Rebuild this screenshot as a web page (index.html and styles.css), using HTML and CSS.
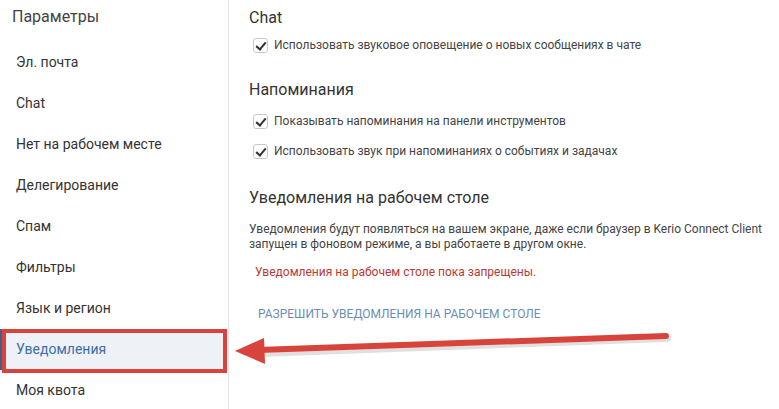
FILE: index.html
```html
<!DOCTYPE html>
<html lang="ru">
<head>
  <meta charset="UTF-8">
  <title>Параметры</title>
  <link rel="stylesheet" href="styles.css">
</head>
<body>
  <div class="page">
    <!-- боковое меню -->
    <div class="sidebar">
      <div class="side-title">Параметры</div>
      <div class="side-item">Эл. почта</div>
      <div class="side-item">Chat</div>
      <div class="side-item">Нет на рабочем месте</div>
      <div class="side-item">Делегирование</div>
      <div class="side-item">Спам</div>
      <div class="side-item">Фильтры</div>
      <div class="side-item">Язык и регион</div>
      <div class="side-item active">Уведомления</div>
      <div class="side-item">Моя квота</div>
    </div>

    <!-- настройки -->
    <div class="main">
      <h2 class="sec-title first">Chat</h2>
      <label class="check-row"><span class="box"></span>Использовать звуковое оповещение о новых сообщениях в чате</label>

      <h2 class="sec-title">Напоминания</h2>
      <div class="group">
        <label class="check-row"><span class="box"></span>Показывать напоминания на панели инструментов</label>
        <label class="check-row"><span class="box"></span>Использовать звук при напоминаниях о событиях и задачах</label>
      </div>

      <h2 class="sec-title wide">Уведомления на рабочем столе</h2>
      <p class="desc">Уведомления будут появляться на вашем экране, даже если браузер в Kerio Connect Client<br>запущен в фоновом режиме, а вы работаете в другом окне.</p>
      <p class="warn">Уведомления на рабочем столе пока запрещены.</p>
      <a class="allow-link">Разрешить уведомления на рабочем столе</a>
    </div>

    <!-- стрелка-указатель -->
    <svg class="arrow" width="779" height="409" viewBox="0 0 779 409">
      <line x1="258" y1="351" x2="666" y2="336" stroke="#000" stroke-opacity="0.12" stroke-width="8" stroke-linecap="round" transform="translate(1 2)"/>
      <line x1="258" y1="350" x2="666" y2="336" stroke="#d8433b" stroke-width="6" stroke-linecap="round"/>
      <polygon points="235,351 264,338 265,364" fill="#d8433b"/>
    </svg>
  </div>
</body>
</html>
```

FILE: styles.css
```css
body {
  margin: 0;
  background: #fff;
  font-family: Roboto, "Liberation Sans", sans-serif;
  color: #333;
}
.page {
  display: flex;
  position: relative;
  height: 409px;
  overflow: hidden;
}
.sidebar {
  width: 228px;
  border-right: 1px solid #e4e4e4;
  flex-shrink: 0;
}
.side-title {
  height: 42px;
  padding-left: 12px;
  font-size: 16px;
  line-height: 34px;
  color: #444;
}
.side-item {
  height: 41px;
  line-height: 41px;
  padding-left: 16px;
  font-size: 14px;
  color: #333;
  position: relative;
}
.side-item.active {
  background: #eef2f7;
  color: #3d6ea6;
  box-shadow: inset 2px 0 0 #4a5a8c;
}
.side-item.active::after {
  content: "";
  position: absolute;
  top: 0;
  left: 2px;
  right: 1px;
  bottom: -3px;
  border: 4px solid #d8433b;
}
.main {
  padding-left: 20px;
  flex: 1;
}
.sec-title {
  margin: 23px 0 0;
  font-size: 16px;
  font-weight: normal;
  line-height: 20px;
  color: #333;
}
.sec-title.first {
  margin-top: 8px;
}
.sec-title.wide {
  margin-top: 25px;
}
.check-row {
  display: flex;
  align-items: center;
  height: 24px;
  margin-top: 5px;
  padding-left: 4px;
  font-size: 12px;
  color: #444;
}
.group {
  padding-top: 4px;
}
.group .check-row + .check-row {
  margin-top: 6px;
}
.box {
  width: 15px;
  height: 15px;
  border: 1px solid #c8c8c8;
  border-radius: 3px;
  margin-right: 6px;
  position: relative;
  box-sizing: border-box;
}
.box::after {
  content: "";
  position: absolute;
  left: 4px;
  top: 1px;
  width: 4px;
  height: 8px;
  border: solid #333;
  border-width: 0 2px 2px 0;
  transform: rotate(40deg);
}
.desc {
  margin: 14px 0 0;
  font-size: 12px;
  line-height: 15px;
  color: #444;
}
.warn {
  margin: 13px 0 0 6px;
  font-size: 12px;
  color: #b83a35;
}
.allow-link {
  display: block;
  margin: 28px 0 0 9px;
  font-size: 12px;
  text-transform: uppercase;
  color: #6c8db3;
}
.arrow {
  position: absolute;
  left: 0;
  top: 0;
}
```
